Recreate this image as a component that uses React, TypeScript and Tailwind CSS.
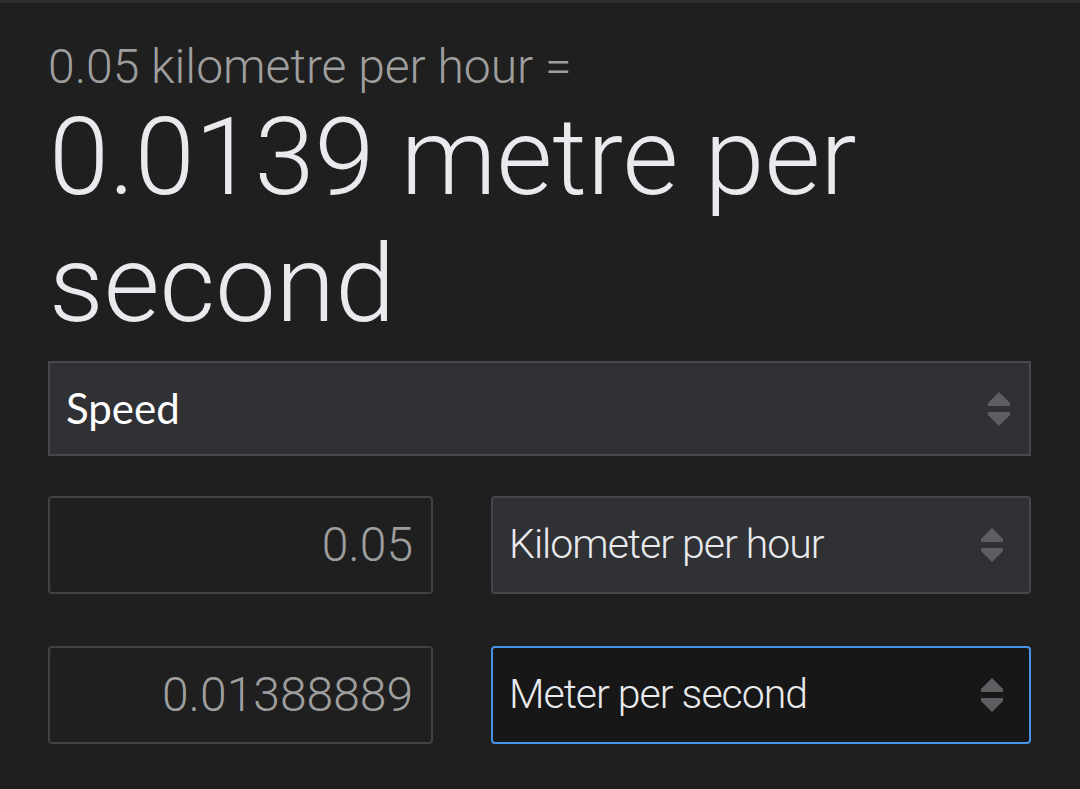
import React from 'react';

const roboto = { fontFamily: 'Roboto, "Liberation Sans", sans-serif' };

function Arrows({ className = '' }: { className?: string }) {
  return (
    <svg viewBox="0 0 22 34" className={`w-[22px] h-[34px] ${className}`} fill="#5c5e62">
      <polygon points="11,0 22,11 22,14 0,14 0,11" />
      <polygon points="0,20 22,20 22,23 11,34 0,23" />
    </svg>
  );
}

function Field({ value }: { value: string }) {
  return (
    <div
      className="w-[385px] h-[98px] shrink-0 rounded-[4px] border-2 border-[#404245] flex items-center justify-end pr-[18px] text-[48px] font-light text-[#9e9e9e]"
      style={roboto}
    >
      {value}
    </div>
  );
}

function UnitSelect({ label, focused }: { label: string; focused?: boolean }) {
  return (
    <div
      className={`flex-1 h-[98px] rounded-[4px] border-2 flex items-center justify-between pl-[16px] pr-[26px] text-[41px] tracking-[-1px] font-light text-[#e8eaed] ${
        focused ? 'border-[#4a92e8] bg-[#171717]' : 'border-[#45474a] bg-[#303134]'
      }`}
      style={roboto}
    >
      <span>{label}</span>
      <Arrows />
    </div>
  );
}

export default function App() {
  return (
    <div className="min-h-[789px] bg-[#1f1f1f] overflow-hidden">
      <div className="h-[3px] bg-[#2d2e31]" />
      <div className="pl-[48px] pr-[49px] pt-[37px]">
        <div className="text-[48px] leading-[54px] font-light text-[#9e9e9e]" style={roboto}>
          0.05 kilometre per hour =
        </div>
        <div className="text-[108px] leading-[127px] font-light text-[#e8eaed] pl-[1px]" style={roboto}>
          0.0139 metre per second
        </div>

        <div className="mt-[13px] h-[95px] border-2 border-[#46484c] bg-[#303134] flex items-center justify-between pl-[16px] pr-[19px]">
          <span
            className="text-[42px] font-normal text-[#ffffff]"
            style={{ fontFamily: 'Lato, "Open Sans", sans-serif' }}
          >
            Speed
          </span>
          <Arrows />
        </div>

        <div className="mt-[40px] flex gap-[58px]">
          <Field value="0.05" />
          <UnitSelect label="Kilometer per hour" />
        </div>
        <div className="mt-[52px] flex gap-[58px]">
          <Field value="0.01388889" />
          <UnitSelect label="Meter per second" focused />
        </div>
      </div>
    </div>
  );
}
